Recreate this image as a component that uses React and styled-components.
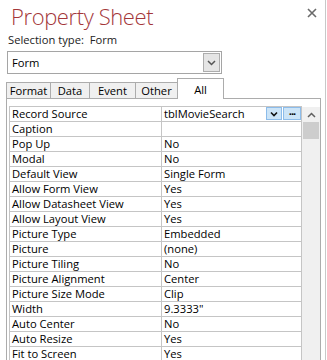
import styled, { createGlobalStyle } from 'styled-components';

const GlobalStyle = createGlobalStyle`
  html, body {
    margin: 0;
    padding: 0;
    background: #ffffff;
  }
  body {
    font-family: "Open Sans", "Noto Sans", "Liberation Sans", sans-serif;
    font-size: 11.2px;
    color: #000;
  }
`;

const properties = [
  ['Record Source', 'tblMovieSearch'],
  ['Caption', ''],
  ['Pop Up', 'No'],
  ['Modal', 'No'],
  ['Default View', 'Single Form'],
  ['Allow Form View', 'Yes'],
  ['Allow Datasheet View', 'Yes'],
  ['Allow Layout View', 'Yes'],
  ['Picture Type', 'Embedded'],
  ['Picture', '(none)'],
  ['Picture Tiling', 'No'],
  ['Picture Alignment', 'Center'],
  ['Picture Size Mode', 'Clip'],
  ['Width', '9.3333"'],
  ['Auto Center', 'No'],
  ['Auto Resize', 'Yes'],
  ['Fit to Screen', 'Yes'],
];

const tabs = [
  { label: 'Format', width: 45 },
  { label: 'Data', width: 40 },
  { label: 'Event', width: 47 },
  { label: 'Other', width: 43 },
  { label: 'All', width: 47, active: true },
];

export default function App() {
  return (
    <>
      <GlobalStyle />
      <Pane>
        <Header>
          <Title>Property Sheet</Title>
          <CloseButton>
            <svg width="10" height="10" viewBox="0 0 10 10">
              <path d="M1 1 L9 9 M9 1 L1 9" stroke="#6a6a6a" strokeWidth="1.6" />
            </svg>
          </CloseButton>
        </Header>
        <SelectionLine>Selection type:&nbsp;&nbsp;Form</SelectionLine>
        <Combo>
          <ComboText>Form</ComboText>
          <ComboButton>
            <svg width="9" height="6" viewBox="0 0 9 6">
              <path d="M1 1 L4.5 4.5 L8 1" stroke="#555" strokeWidth="1.5" fill="none" />
            </svg>
          </ComboButton>
        </Combo>
        <TabRow>
          {tabs.map((t) => (
            <Tab key={t.label} $width={t.width} $active={t.active}>
              {t.label}
            </Tab>
          ))}
        </TabRow>
        <Panel>
          <Grid>
            <Table>
              {properties.map(([name, value], i) => (
                <Row key={name}>
                  <LabelCell>{name}</LabelCell>
                  <ValueCell>
                    <span>{value}</span>
                    {i === 0 && (
                      <Builders>
                        <MiniButton $width={16}>
                          <svg width="8" height="6" viewBox="0 0 8 6">
                            <path d="M1 1.5 L4 4.5 L7 1.5" stroke="#111" strokeWidth="1.6" fill="none" />
                          </svg>
                        </MiniButton>
                        <MiniButton $width={18}>
                          <Dots>···</Dots>
                        </MiniButton>
                      </Builders>
                    )}
                  </ValueCell>
                </Row>
              ))}
            </Table>
            <Scrollbar>
              <ScrollArrow>
                <svg width="9" height="6" viewBox="0 0 9 6">
                  <path d="M1 5 L4.5 1.5 L8 5" stroke="#606060" strokeWidth="1.5" fill="none" />
                </svg>
              </ScrollArrow>
              <Thumb />
            </Scrollbar>
          </Grid>
        </Panel>
      </Pane>
    </>
  );
}

const Pane = styled.div`
  width: 325px;
  height: 360px;
  border-right: 1px solid #c8c8c8;
  overflow: hidden;
  display: flex;
  flex-direction: column;
`;

const Header = styled.div`
  flex-shrink: 0;
  height: 33px;
  display: flex;
  justify-content: space-between;
  align-items: flex-start;
`;

const Title = styled.div`
  margin-left: 11px;
  margin-top: 3px;
  font-family: "Open Sans", sans-serif;
  font-size: 22px;
  font-weight: 300;
  letter-spacing: -0.4px;
  line-height: 26px;
  color: #a4373a;
`;

const CloseButton = styled.div`
  margin-top: 8px;
  margin-right: 8px;
  width: 10px;
  height: 10px;
  display: flex;
`;

const SelectionLine = styled.div`
  flex-shrink: 0;
  height: 13px;
  line-height: 13px;
  padding-left: 8px;
  color: #222;
`;

const Combo = styled.div`
  flex-shrink: 0;
  margin-top: 5px;
  margin-left: 7px;
  width: 213px;
  height: 21px;
  border: 1px solid #a5a5a5;
  display: flex;
  align-items: center;
  justify-content: space-between;
`;

const ComboText = styled.span`
  padding-left: 4px;
`;

const ComboButton = styled.div`
  width: 15px;
  height: 17px;
  margin-right: 1px;
  border: 1px solid #adadad;
  background: #e5e5e5;
  display: flex;
  align-items: center;
  justify-content: center;
`;

const TabRow = styled.div`
  flex-shrink: 0;
  margin-top: 4px;
  margin-left: 6px;
  height: 20px;
  display: flex;
  align-items: flex-end;
  position: relative;
  z-index: 1;
`;

const Tab = styled.div`
  box-sizing: border-box;
  width: ${(p) => p.$width}px;
  height: ${(p) => (p.$active ? 21 : 16)}px;
  margin-left: -1px;
  margin-bottom: ${(p) => (p.$active ? -1 : 0)}px;
  &:first-child {
    margin-left: 0;
  }
  border: 1px solid #acacac;
  border-bottom: none;
  background: ${(p) => (p.$active ? '#ffffff' : '#f0f0f0')};
  display: flex;
  justify-content: center;
  align-items: ${(p) => (p.$active ? 'flex-start' : 'center')};
  padding-top: ${(p) => (p.$active ? 4 : 1)}px;
  line-height: 14px;
  color: #000;
`;

const Panel = styled.div`
  margin-left: 6px;
  width: 315px;
  flex: 1;
  min-height: 0;
  overflow: hidden;
  border: 1px solid #acacac;
  border-bottom: none;
  padding: 7px 0 0 2px;
  box-sizing: border-box;
`;

const Grid = styled.div`
  display: flex;
  align-items: flex-start;
`;

const Table = styled.div`
  flex-shrink: 0;
  width: 293px;
  border-left: 1px solid #c5c5c5;
  border-top: 1px solid #c5c5c5;
  box-sizing: border-box;
`;

const Row = styled.div`
  display: grid;
  grid-template-columns: 152px 140px;
  height: 15px;
`;

const cell = `
  box-sizing: border-box;
  height: 15px;
  border-right: 1px solid #c5c5c5;
  border-bottom: 1px solid #c5c5c5;
  line-height: 14px;
  white-space: nowrap;
  overflow: hidden;
`;

const LabelCell = styled.div`
  ${cell}
  padding-left: 2px;
`;

const ValueCell = styled.div`
  ${cell}
  padding-left: 2px;
  display: flex;
  justify-content: space-between;
  align-items: flex-start;
`;

const Builders = styled.div`
  display: flex;
  gap: 1px;
`;

const MiniButton = styled.div`
  box-sizing: border-box;
  width: ${(p) => p.$width}px;
  height: 13px;
  border: 1px solid #8cbcea;
  background: #cce4f7;
  display: flex;
  align-items: center;
  justify-content: center;
`;

const Dots = styled.span`
  font-size: 11px;
  font-weight: 700;
  line-height: 8px;
  letter-spacing: -1px;
`;

const Scrollbar = styled.div`
  flex-shrink: 0;
  margin-top: 1px;
  width: 18px;
  height: 260px;
  background: #f0f0f0;
  display: flex;
  flex-direction: column;
  align-items: center;
`;

const ScrollArrow = styled.div`
  height: 15px;
  width: 18px;
  display: flex;
  align-items: center;
  justify-content: center;
`;

const Thumb = styled.div`
  width: 16px;
  height: 17px;
  background: #cdcdcd;
`;
